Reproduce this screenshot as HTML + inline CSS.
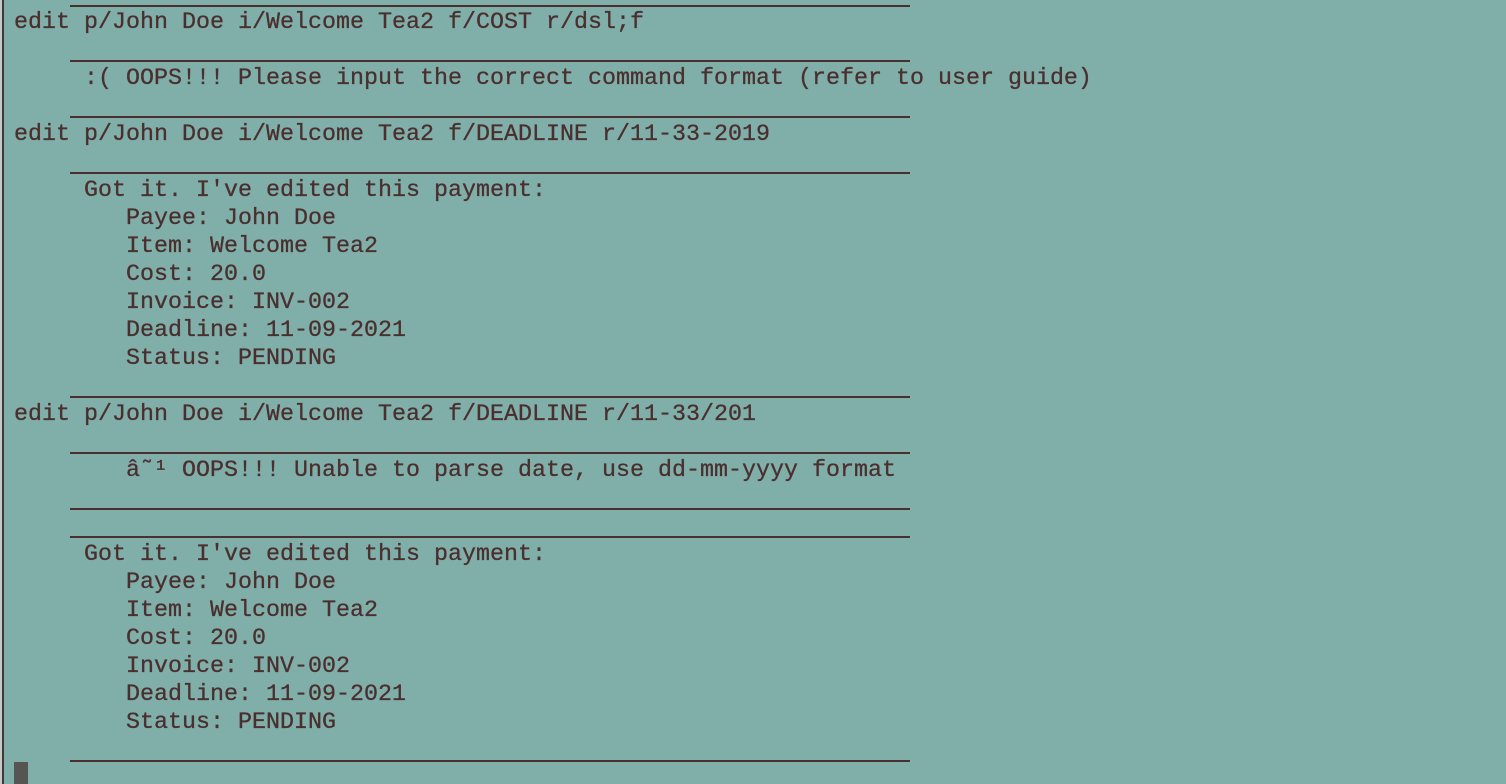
<!DOCTYPE html>
<html><head><meta charset="utf-8"><style>
html,body{margin:0;padding:0;}
body{width:1506px;height:784px;background:#80aea9;position:relative;overflow:hidden;}
.edge{position:absolute;left:0;top:0;width:2px;height:784px;background:#c8c8c8;}
.edge2{position:absolute;left:2px;top:0;width:2px;height:784px;background:#3a3a3a;}
pre{position:absolute;left:14px;top:9px;margin:0;font-family:"Liberation Mono",monospace;font-size:23.33px;line-height:28px;color:#4a2f2f;-webkit-text-stroke:0.3px #4a2f2f;}
.l{position:absolute;left:70px;width:840px;height:2px;background:#4a2f2f;}
.cur{position:absolute;left:14px;top:762px;width:14px;height:22px;background:#555552;}
</style></head><body>
<div class="edge"></div><div class="edge2"></div>
<div class="l" style="top:5px"></div>
<div class="l" style="top:60px"></div>
<div class="l" style="top:116px"></div>
<div class="l" style="top:172px"></div>
<div class="l" style="top:396px"></div>
<div class="l" style="top:452px"></div>
<div class="l" style="top:508px"></div>
<div class="l" style="top:536px"></div>
<div class="l" style="top:760px"></div>
<pre>edit p/John Doe i/Welcome Tea2 f/COST r/dsl;f

     :( OOPS!!! Please input the correct command format (refer to user guide)

edit p/John Doe i/Welcome Tea2 f/DEADLINE r/11-33-2019

     Got it. I've edited this payment:
        Payee: John Doe
        Item: Welcome Tea2
        Cost: 20.0
        Invoice: INV-002
        Deadline: 11-09-2021
        Status: PENDING

edit p/John Doe i/Welcome Tea2 f/DEADLINE r/11-33/201

        â˜¹ OOPS!!! Unable to parse date, use dd-mm-yyyy format


     Got it. I've edited this payment:
        Payee: John Doe
        Item: Welcome Tea2
        Cost: 20.0
        Invoice: INV-002
        Deadline: 11-09-2021
        Status: PENDING</pre>
<div class="cur"></div>
</body></html>
